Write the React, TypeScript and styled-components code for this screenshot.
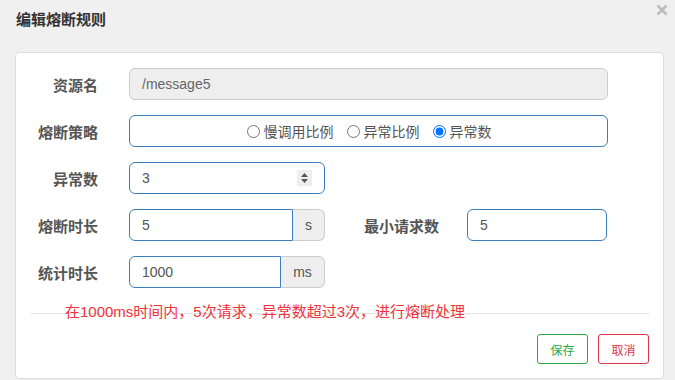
import React from "react";
import styled, { createGlobalStyle } from "styled-components";

const Global = createGlobalStyle`
  html, body { margin: 0; padding: 0; background: #f0f0f0; }
  body { font-family: "Liberation Sans", "Noto Sans CJK SC", sans-serif; }
  * { box-sizing: border-box; }
`;

const Page = styled.div`
  width: 675px;
  height: 380px;
  overflow: hidden;
  background: #f0f0f0;
`;

const Header = styled.div`
  height: 52px;
  display: flex;
  justify-content: space-between;
  align-items: flex-start;
  padding: 0 7px 0 16px;
`;

const Title = styled.h4`
  margin: 10px 0 0;
  font-size: 15px;
  line-height: 20px;
  font-weight: bold;
  color: #333;
`;

const Close = styled.button`
  margin-top: 4px;
  padding: 0;
  border: 0;
  background: transparent;
  width: 12px;
  height: 12px;
  display: flex;
  cursor: pointer;
`;

const Panel = styled.div`
  margin: 0 11px 0 15px;
  height: 327px;
  background: #fff;
  border: 1px solid #ddd;
  border-radius: 4px;
  padding-top: 15px;
  display: flex;
  flex-direction: column;
`;

const Form = styled.div`
  display: flex;
  flex-direction: column;
  gap: 15px;
`;

const Row = styled.div`
  display: flex;
  align-items: center;
  height: 32px;
`;

const Label = styled.label<{ $w?: number; $gap?: number }>`
  width: ${(p) => p.$w ?? 82}px;
  margin-right: ${(p) => p.$gap ?? 31}px;
  text-align: right;
  font-size: 15px;
  font-weight: bold;
  color: #555;
  white-space: nowrap;
`;

const TextInput = styled.input<{ $w: number; $grouped?: boolean }>`
  width: ${(p) => p.$w}px;
  height: 32px;
  padding: 0 12px;
  font: 14px "Liberation Sans", "Noto Sans CJK SC", sans-serif;
  color: #555;
  background: #fff;
  border: 1px solid #3a7ebf;
  border-radius: ${(p) => (p.$grouped ? "6px 0 0 6px" : "6px")};
  outline: none;
  &:disabled {
    background: #eee;
    border-color: #ccc;
    color: #666;
  }
`;

const Group = styled.div`
  display: flex;
  width: 196px;
  height: 32px;
`;

const Addon = styled.span`
  flex: 1;
  display: flex;
  align-items: center;
  justify-content: center;
  background: #eee;
  border: 1px solid #ccc;
  border-left: 0;
  border-radius: 0 6px 6px 0;
  font-size: 14px;
  color: #555;
`;

const RadioBox = styled.div`
  width: 479px;
  height: 32px;
  border: 1px solid #3a7ebf;
  border-radius: 6px;
  display: flex;
  align-items: center;
  justify-content: center;
  gap: 13px;
  padding-left: 1px;
`;

const RadioLabel = styled.label`
  display: flex;
  align-items: center;
  font-size: 14px;
  color: #555;
  font-family: "Noto Sans CJK SC", sans-serif;
  & input {
    margin: 0 4px 0 0;
    width: 13px;
    height: 13px;
  }
`;

const NumberBox = styled.div`
  width: 196px;
  height: 32px;
  border: 1px solid #3a7ebf;
  border-radius: 6px;
  display: flex;
  align-items: center;
  padding-right: 12px;
  & input {
    flex: 1;
    min-width: 0;
    height: 100%;
    border: 0;
    outline: none;
    padding: 0 12px;
    background: transparent;
    font: 14px "Liberation Sans", sans-serif;
    color: #555;
  }
`;

const Spinner = styled.span`
  width: 15px;
  height: 16px;
  background: #eee;
  display: flex;
  align-items: center;
  justify-content: center;
`;

const Note = styled.div`
  position: relative;
  margin-top: 14px;
  padding-left: 49px;
  font-size: 15px;
  line-height: 20px;
  color: #f0323c;
  &::before {
    content: "";
    position: absolute;
    left: 15px;
    right: 14px;
    top: 11px;
    height: 1px;
    background: #e3e3e3;
  }
  & span {
    position: relative;
  }
`;

const Footer = styled.div`
  display: flex;
  justify-content: flex-end;
  gap: 10px;
  margin-top: 12px;
  padding-right: 14px;
`;

const Btn = styled.button<{ $c: string }>`
  width: 51px;
  height: 30px;
  padding: 0;
  background: #fff;
  border: 1px solid ${(p) => p.$c};
  color: ${(p) => p.$c};
  border-radius: 3px;
  font: 12px "Noto Sans CJK SC", sans-serif;
  cursor: pointer;
`;

export default function App() {
  return (
    <Page>
      <Global />
      <Header>
        <Title>编辑熔断规则</Title>
        <Close aria-label="close">
          <svg width="12" height="12" viewBox="0 0 12 12">
            <path d="M1.5 1.5 L10.5 10.5 M10.5 1.5 L1.5 10.5" stroke="#bdbdbd" strokeWidth="2.6" />
          </svg>
        </Close>
      </Header>
      <Panel>
        <Form>
          <Row>
            <Label>资源名</Label>
            <TextInput $w={479} disabled defaultValue="/message5" />
          </Row>
          <Row>
            <Label>熔断策略</Label>
            <RadioBox>
              <RadioLabel>
                <input type="radio" name="grade" />
                慢调用比例
              </RadioLabel>
              <RadioLabel>
                <input type="radio" name="grade" />
                异常比例
              </RadioLabel>
              <RadioLabel>
                <input type="radio" name="grade" defaultChecked />
                异常数
              </RadioLabel>
            </RadioBox>
          </Row>
          <Row>
            <Label>异常数</Label>
            <NumberBox>
              <input defaultValue="3" />
              <Spinner>
                <svg width="9" height="12" viewBox="0 0 9 12">
                  <path d="M4.5 1 L8 5 L1 5 Z M1 7 L8 7 L4.5 11 Z" fill="#555" />
                </svg>
              </Spinner>
            </NumberBox>
          </Row>
          <Row>
            <Label>熔断时长</Label>
            <Group>
              <TextInput $w={164} $grouped defaultValue="5" />
              <Addon>s</Addon>
            </Group>
            <Label $w={114} $gap={28}>最小请求数</Label>
            <TextInput $w={140} defaultValue="5" />
          </Row>
          <Row>
            <Label>统计时长</Label>
            <Group>
              <TextInput $w={152} $grouped defaultValue="1000" />
              <Addon>ms</Addon>
            </Group>
          </Row>
        </Form>
        <Note>
          <span>在1000ms时间内，5次请求，异常数超过3次，进行熔断处理</span>
        </Note>
        <Footer>
          <Btn $c="#28a745">保存</Btn>
          <Btn $c="#dc3545">取消</Btn>
        </Footer>
      </Panel>
    </Page>
  );
}
